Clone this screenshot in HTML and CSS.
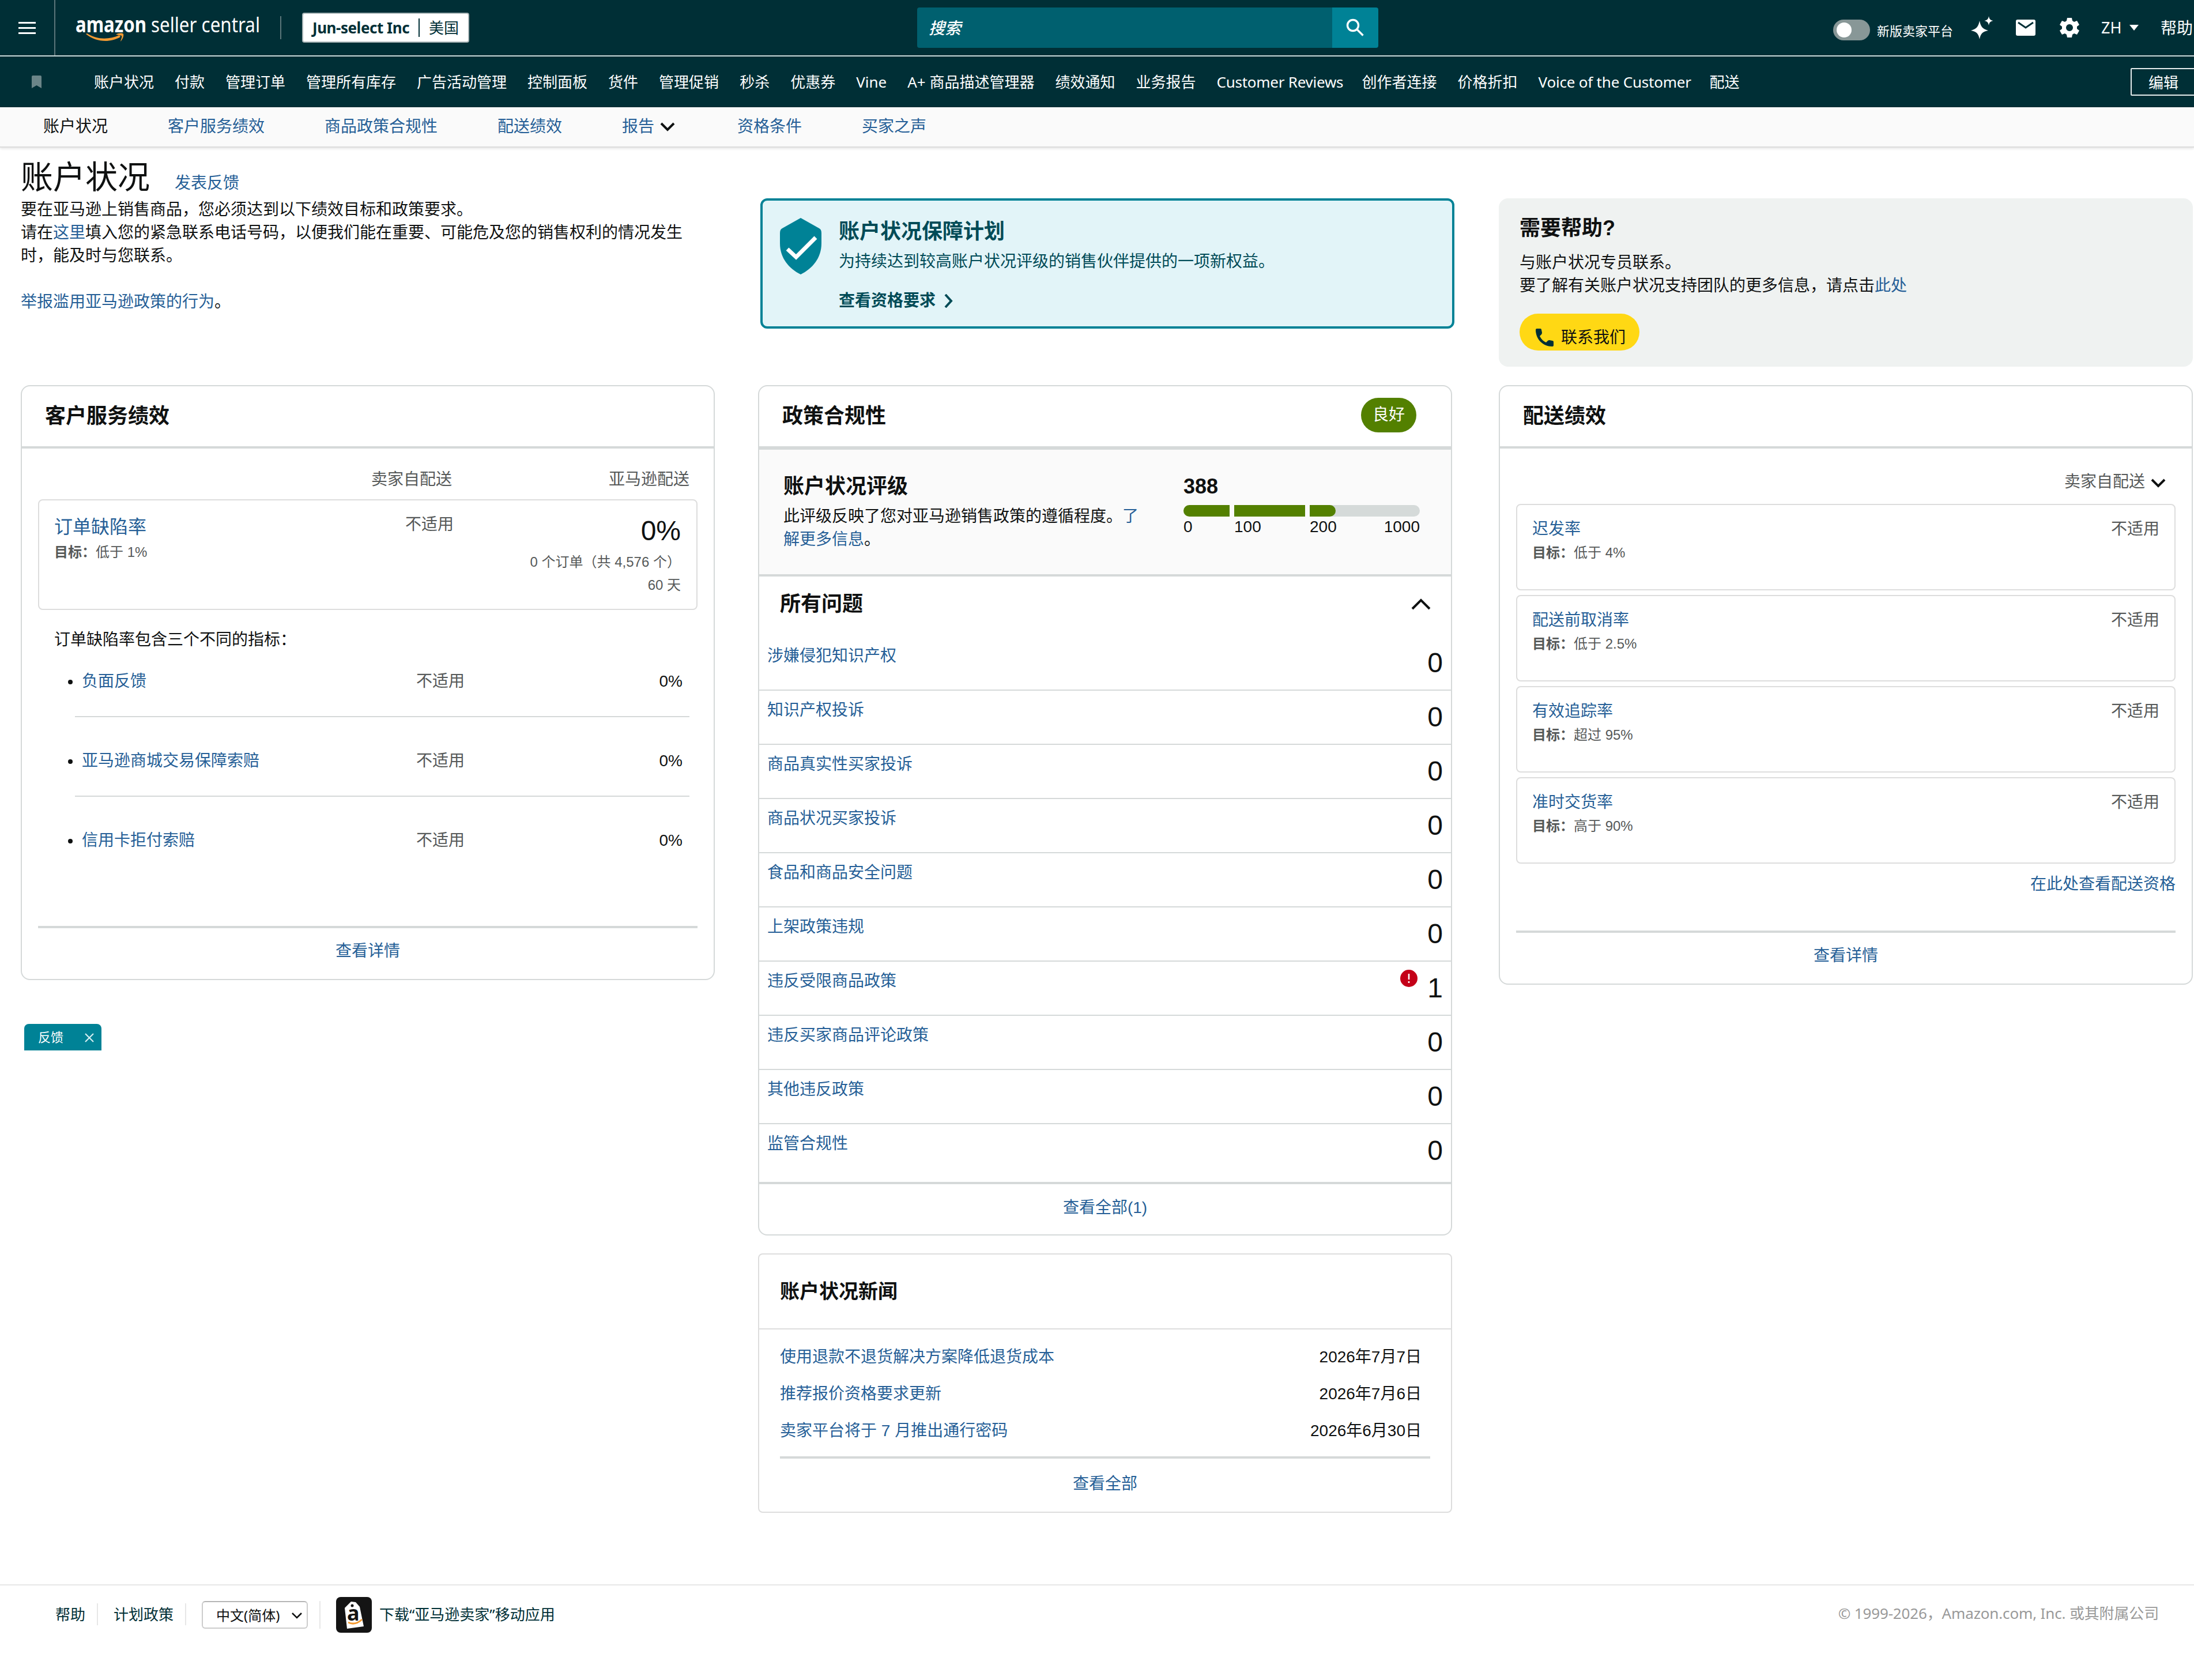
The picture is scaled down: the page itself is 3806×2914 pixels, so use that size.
FILE: index.html
```html
<!DOCTYPE html>
<html lang="zh-CN">
<head>
    <meta charset="UTF-8">
    <meta name="viewport" content="width=device-width, initial-scale=1.0">
    <title>账户状况</title>
    <link rel="stylesheet" href="styles.css">
</head>
<body>
    <header class="topbar">
        <div class="menu">
            <span></span><span></span><span></span>
        </div>
        <svg class="logo" width="324" height="76" viewBox="0 -16 324 76">
            <text x="0" y="36" class="logo-bold" textLength="123" lengthAdjust="spacingAndGlyphs">amazon</text>
            <text x="131" y="36" class="logo-light" textLength="189" lengthAdjust="spacingAndGlyphs">seller central</text>
            <path d="M18 39c17 14 41 16 60 5l-2-3c-18 8-39 8-56-3z" fill="#f49b33"/>
            <path d="M70 40c5-3 11-3 13-1 1 3-1 9-5 13 1-4 3-8 2-10-2-1-6-1-10-2z" fill="#f49b33"/>
        </svg>
        <div class="bar-divider"></div>
        <div class="account">
            <b>Jun-select Inc</b>
            <i></i>
            <span>美国</span>
        </div>
        <div class="search">
            <div class="search-input">搜索</div>
            <div class="search-button">
                <svg width="32" height="32" viewBox="0 0 32 32" fill="none" stroke="#fff" stroke-width="3.4">
                    <circle cx="12" cy="12" r="9.5"/>
                    <path d="M19 19l10.500 10.500"/>
                </svg>
            </div>
        </div>
        <div class="tools">
            <div class="toggle"><span></span></div>
            <span class="toggle-label">新版卖家平台</span>
            <svg class="spark" width="40" height="40" viewBox="0 0 40 40" fill="#fff">
                <path d="M16 8c2 10 5 14 15 17-10 2-13 5-15 15-2-10-5-13-15-15 10-3 13-7 15-17z"/>
                <path d="M32 0c1 5 2.500 7 7.500 8-5 1-6.500 3-7.500 8-1-5-2.500-7-7.500-8 5-1 6.500-3 7.500-8z"/>
            </svg>
            <svg class="mail" width="34" height="28" viewBox="0 0 34 28">
                <rect width="34" height="28" rx="3" fill="#fff"/>
                <path d="M4 5l13 9 13-9" fill="none" stroke="#002f36" stroke-width="3"/>
            </svg>
            <svg class="gear" width="34" height="34" viewBox="0 0 34 34">
                <path fill="#fff" fill-rule="evenodd" d="M13 0h8l1 5 3 2 5-2 4 7-4 3v4l4 3-4 7-5-2-3 2-1 5h-8l-1-5-3-2-5 2-4-7 4-3v-4l-4-3 4-7 5 2 3-2zM17 11a6 6 0 1 0 .01 0z"/>
            </svg>
            <span class="lang">ZH</span>
            <span class="caret"></span>
            <span class="help">帮助</span>
        </div>
    </header>

    <nav class="favorites">
        <svg width="17" height="22" viewBox="0 0 17 22"><path d="M0 2q0-2 2-2h13q2 0 2 2v20l-8.500-5L0 22z" fill="#6b8588"/></svg>
        <div class="fav-list">
            <span>账户状况</span>
            <span>付款</span>
            <span>管理订单</span>
            <span>管理所有库存</span>
            <span>广告活动管理</span>
            <span>控制面板</span>
            <span>货件</span>
            <span>管理促销</span>
            <span>秒杀</span>
            <span>优惠券</span>
            <span>Vine</span>
            <span>A+ 商品描述管理器</span>
            <span>绩效通知</span>
            <span>业务报告</span>
            <span class="fav-reviews">Customer Reviews</span>
            <span>创作者连接</span>
            <span>价格折扣</span>
            <span class="fav-voice">Voice of the Customer</span>
            <span>配送</span>
        </div>
        <div class="edit">编辑</div>
    </nav>

    <nav class="subnav">
        <span class="active">账户状况</span>
        <a>客户服务绩效</a>
        <a>商品政策合规性</a>
        <a>配送绩效</a>
        <a class="with-icon">报告
            <svg width="26" height="16" viewBox="0 0 26 16" fill="none" stroke="#0f1111" stroke-width="4"><path d="M2 2l11 11L24 2"/></svg>
        </a>
        <a>资格条件</a>
        <a>买家之声</a>
    </nav>

    <main>
        <section class="intro">
            <div class="intro-text">
                <div class="title-row">
                    <h1>账户状况</h1>
                    <a>发表反馈</a>
                </div>
                <p>要在亚马逊上销售商品，您必须达到以下绩效目标和政策要求。<br>请在<a>这里</a>填入您的紧急联系电话号码，以便我们能在重要、可能危及您的销售权利的情况发生时，能及时与您联系。</p>
                <p class="report"><a>举报滥用亚马逊政策的行为</a>。</p>
            </div>
            <div class="program">
                <svg class="shield" width="72" height="98" viewBox="0 0 72 98">
                    <path d="M36 0L68 18q4 2 4 8v18c0 26-16 44-36 54C16 88 0 70 0 44V26q0-6 4-8z" fill="#008296"/>
                    <path d="M13 54l15 14 34-34" fill="none" stroke="#fff" stroke-width="7"/>
                </svg>
                <div>
                    <h2>账户状况保障计划</h2>
                    <p>为持续达到较高账户状况评级的销售伙伴提供的一项新权益。</p>
                    <div class="program-link">查看资格要求
                        <svg width="16" height="24" viewBox="0 0 16 24" fill="none" stroke="#004b57" stroke-width="4"><path d="M3 1l10 11L3 23"/></svg>
                    </div>
                </div>
            </div>
            <div class="contact">
                <h2>需要帮助?</h2>
                <p>与账户状况专员联系。<br>要了解有关账户状况支持团队的更多信息，请点击<a>此处</a></p>
                <div class="contact-button">
                    <svg width="31" height="31" viewBox="0 0 31 31"><path d="M2 0h6q2 0 2 2l1 5q0 2-1 3l-3 3q4 8 11 11l3-3q1-1 3-1l5 1q2 0 2 2v6q0 2-2 2C12 31 0 18 0 2Q0 0 2 0z" fill="#002f36"/></svg>
                    <span>联系我们</span>
                </div>
            </div>
        </section>

        <section class="columns">
            <div class="column">
                <div class="card service-card">
                    <div class="card-head"><h2>客户服务绩效</h2></div>
                    <div class="service-cols">
                        <span>卖家自配送</span>
                        <span>亚马逊配送</span>
                    </div>
                    <div class="odr">
                        <div class="odr-name">
                            <a>订单缺陷率</a>
                            <p class="target"><b>目标：</b>低于 1%</p>
                        </div>
                        <div class="odr-self">不适用</div>
                        <div class="odr-fba">
                            <div class="big">0%</div>
                            <p>0 个订单（共 4,576 个）</p>
                            <p>60 天</p>
                        </div>
                    </div>
                    <p class="odr-note">订单缺陷率包含三个不同的指标：</p>
                    <ul class="odr-list">
                        <li><a>负面反馈</a><span class="gray">不适用</span><span>0%</span></li>
                        <li><a>亚马逊商城交易保障索赔</a><span class="gray">不适用</span><span>0%</span></li>
                        <li><a>信用卡拒付索赔</a><span class="gray">不适用</span><span>0%</span></li>
                    </ul>
                    <div class="card-foot"><a>查看详情</a></div>
                </div>
                <div class="feedback-tab">
                    <span>反馈</span>
                    <svg width="16" height="16" viewBox="0 0 16 16" stroke="#d5eef1" stroke-width="2.200"><path d="M1 1l14 14M15 1L1 15"/></svg>
                </div>
            </div>

            <div class="column">
                <div class="card policy-card">
                    <div class="card-head">
                        <h2>政策合规性</h2>
                        <span class="badge">良好</span>
                    </div>
                    <div class="rating">
                        <div class="rating-text">
                            <h2>账户状况评级</h2>
                            <p>此评级反映了您对亚马逊销售政策的遵循程度。<a>了解更多信息</a>。</p>
                        </div>
                        <div class="rating-score">
                            <h2>388</h2>
                            <div class="meter">
                                <span class="seg seg-1"></span>
                                <span class="seg seg-2"></span>
                                <span class="seg seg-3"></span>
                            </div>
                            <div class="scale">
                                <span>0</span><span>100</span><span>200</span><span>1000</span>
                            </div>
                        </div>
                    </div>
                    <div class="issues-head">
                        <h2>所有问题</h2>
                        <svg width="34" height="20" viewBox="0 0 34 20" fill="none" stroke="#0f1111" stroke-width="4"><path d="M2 18L17 3l15 15"/></svg>
                    </div>
                    <div class="issues">
                        <div class="issue"><a>涉嫌侵犯知识产权</a><span>0</span></div>
                        <div class="issue"><a>知识产权投诉</a><span>0</span></div>
                        <div class="issue"><a>商品真实性买家投诉</a><span>0</span></div>
                        <div class="issue"><a>商品状况买家投诉</a><span>0</span></div>
                        <div class="issue"><a>食品和商品安全问题</a><span>0</span></div>
                        <div class="issue"><a>上架政策违规</a><span>0</span></div>
                        <div class="issue">
                            <a>违反受限商品政策</a>
                            <svg width="30" height="30" viewBox="0 0 30 30">
                                <circle cx="15" cy="15" r="15" fill="#c40018"/>
                                <path d="M15 7v10M15 20v3" stroke="#fff" stroke-width="2.600"/>
                            </svg>
                            <span>1</span>
                        </div>
                        <div class="issue"><a>违反买家商品评论政策</a><span>0</span></div>
                        <div class="issue"><a>其他违反政策</a><span>0</span></div>
                        <div class="issue"><a>监管合规性</a><span>0</span></div>
                    </div>
                    <div class="card-foot"><a>查看全部(1)</a></div>
                </div>

                <div class="card news-card">
                    <div class="news-head"><h2>账户状况新闻</h2></div>
                    <div class="news-list">
                        <div><a>使用退款不退货解决方案降低退货成本</a><span>2026年7月7日</span></div>
                        <div><a>推荐报价资格要求更新</a><span>2026年7月6日</span></div>
                        <div><a>卖家平台将于 7 月推出通行密码</a><span>2026年6月30日</span></div>
                    </div>
                    <div class="card-foot"><a>查看全部</a></div>
                </div>
            </div>

            <div class="column">
                <div class="card shipping-card">
                    <div class="card-head"><h2>配送绩效</h2></div>
                    <div class="ship-select">卖家自配送
                        <svg width="26" height="16" viewBox="0 0 26 16" fill="none" stroke="#0f1111" stroke-width="4"><path d="M2 2l11 11L24 2"/></svg>
                    </div>
                    <div class="metric">
                        <div><a>迟发率</a><p class="target"><b>目标：</b>低于 4%</p></div>
                        <span>不适用</span>
                    </div>
                    <div class="metric">
                        <div><a>配送前取消率</a><p class="target"><b>目标：</b>低于 2.5%</p></div>
                        <span>不适用</span>
                    </div>
                    <div class="metric">
                        <div><a>有效追踪率</a><p class="target"><b>目标：</b>超过 95%</p></div>
                        <span>不适用</span>
                    </div>
                    <div class="metric">
                        <div><a>准时交货率</a><p class="target"><b>目标：</b>高于 90%</p></div>
                        <span>不适用</span>
                    </div>
                    <div class="ship-more"><a>在此处查看配送资格</a></div>
                    <div class="card-foot"><a>查看详情</a></div>
                </div>
            </div>
        </section>
    </main>

    <footer>
        <span class="foot-item foot-help">帮助</span>
        <span class="foot-item foot-policy">计划政策</span>
        <div class="lang-select">中文(简体)
            <svg width="18" height="12" viewBox="0 0 18 12" fill="none" stroke="#0f1111" stroke-width="2.600"><path d="M1 2l8 8 8-8"/></svg>
        </div>
        <div class="foot-line"></div>
        <svg class="app" width="62" height="62" viewBox="0 0 62 62">
            <rect width="62" height="62" rx="8" fill="#141414"/>
            <path d="M26 8l8 1 7 8 7 34-29 4-4-36z" fill="#fff"/>
            <circle cx="28" cy="15" r="2.500" fill="#141414"/>
            <text x="19" y="41" class="app-letter">a</text>
            <path d="M21 44q12 6 24-5" fill="none" stroke="#f49b33" stroke-width="3"/>
        </svg>
        <span>下载“亚马逊卖家”移动应用</span>
        <span class="copyright">© 1999-2026，Amazon.com, Inc. 或其附属公司</span>
    </footer>
</body>
</html>
```
FILE: styles.css
```css
* {
    box-sizing: border-box;
}
body {
    margin: 0;
    width: 3806px;
    height: 2914px;
    overflow: hidden;
    background: #fff;
    color: #0f1111;
    font-family: "Liberation Sans", "Noto Sans CJK SC", sans-serif;
    font-size: 28px;
    line-height: 40px;
}
h1, h2, p, ul {
    margin: 0;
    padding: 0;
}
h2 {
    font-size: 36px;
    line-height: 48px;
    font-weight: bold;
}
a {
    color: #265f97;
}
svg {
    display: block;
    flex-shrink: 0;
}

/* top bar */
.topbar, .favorites, footer {
    font-family: "Noto Sans", "Noto Sans CJK SC", sans-serif;
}
.topbar {
    display: flex;
    align-items: center;
    height: 98px;
    background: #002f36;
    border-bottom: 2px solid #ccd9da;
    color: #fff;
    font-size: 26px;
    white-space: nowrap;
}
.topbar > * {
    flex-shrink: 0;
}
.menu {
    width: 96px;
    height: 96px;
    padding: 38px 0 0 32px;
    border-right: 2px solid #5b767a;
}
.menu span {
    display: block;
    width: 30px;
    height: 3px;
    margin-bottom: 6px;
    background: #fff;
}
.logo {
    margin: -12px 0 0 35px;
}
.logo-bold {
    font-size: 37px;
    font-weight: bold;
    fill: #fff;
}
.logo-light {
    font-size: 37px;
    fill: #fff;
}
.bar-divider {
    width: 2px;
    height: 40px;
    margin-left: 31px;
    background: #5b767a;
}
.account {
    display: flex;
    align-items: center;
    width: 290px;
    height: 52px;
    margin-left: 36px;
    padding-left: 16px;
    background: #fff;
    border: 2px solid #a9b5b7;
    border-radius: 4px;
    color: #002f36;
    font-size: 26px;
}
.account b {
    flex-shrink: 0;
    width: 184px;
    letter-spacing: -0.45px;
}
.account i {
    width: 2px;
    height: 32px;
    background: #002f36;
    margin-right: 16px;
}
.search {
    display: flex;
    width: 800px;
    height: 70px;
    margin-left: 777px;
    border-radius: 4px;
    overflow: hidden;
}
.search-input {
    flex: 1;
    padding-left: 20px;
    background: #00606f;
    font-size: 28px;
    font-style: italic;
    font-weight: 500;
    line-height: 70px;
}
.search-button {
    display: flex;
    align-items: center;
    justify-content: center;
    width: 80px;
    background: #008296;
}
.tools {
    display: flex;
    align-items: center;
    margin-left: 789px;
}
.toggle {
    width: 64px;
    height: 36px;
    margin-top: 8px;
    padding: 5px 6px;
    border-radius: 18px;
    background: #889797;
}
.toggle span {
    display: block;
    width: 26px;
    height: 26px;
    border-radius: 50%;
    background: #fff;
}
.toggle-label {
    width: 132px;
    margin: 10px 0 0 12px;
    font-size: 22px;
}
.spark {
    margin-left: 30px;
}
.mail {
    margin-left: 39px;
}
.gear {
    margin-left: 42px;
}
.lang {
    width: 46px;
    margin-left: 38px;
    font-size: 27px;
}
.caret {
    margin-left: 3px;
    border: 8px solid transparent;
    border-top: 10px solid #fff;
    border-bottom: 0;
}
.help {
    margin-left: 38px;
    font-size: 28px;
}

/* favourites bar */
.favorites {
    display: flex;
    align-items: center;
    height: 88px;
    padding-left: 55px;
    background: #002f36;
    color: #fff;
    font-size: 26px;
    white-space: nowrap;
}
.fav-list {
    display: flex;
    gap: 36px;
    width: 3532px;
    margin-left: 91px;
    flex-shrink: 0;
}
.fav-reviews {
    width: 216px;
    letter-spacing: -0.25px;
}
.fav-voice {
    width: 261px;
    letter-spacing: -0.2px;
}
.edit {
    flex-shrink: 0;
    width: 140px;
    height: 48px;
    margin-left: 1px;
    padding-left: 29px;
    border: 2px solid #e5ecec;
    border-radius: 2px;
    line-height: 46px;
}

/* page tabs */
.subnav {
    display: flex;
    gap: 104px;
    height: 70px;
    padding: 14px 0 0 75px;
    background: #fafafa;
    border-bottom: 2px solid #ddd;
    box-shadow: 0 2px 4px rgba(0, 0, 0, 0.1);
}
.with-icon {
    display: flex;
    align-items: center;
    gap: 10px;
    width: 96px;
    height: 40px;
    white-space: nowrap;
}

main {
    height: 2492px;
}
.intro {
    display: flex;
    height: 412px;
}
.intro-text {
    width: 1160px;
    margin: 16px 123px 0 36px;
}
.title-row {
    display: flex;
    align-items: baseline;
    gap: 43px;
    height: 72px;
}
h1 {
    font-size: 56px;
    line-height: 72px;
    font-weight: normal;
}
.report {
    margin-top: 40px;
}
.program {
    display: flex;
    width: 1204px;
    height: 226px;
    margin-top: 88px;
    padding: 30px 0 0 30px;
    background: #e2f4f8;
    border: 4px solid #008296;
    border-radius: 12px;
    color: #004b57;
}
.shield {
    margin-right: 30px;
}
.program h2 {
    margin-bottom: 8px;
}
.program-link {
    display: flex;
    align-items: center;
    gap: 14px;
    margin-top: 28px;
    font-weight: bold;
}
.contact {
    width: 1204px;
    height: 292px;
    margin: 88px 0 0 77px;
    padding: 28px 36px;
    background: #eff2f1;
    border-radius: 16px;
}
.contact p {
    margin-top: 16px;
}
.contact-button {
    display: flex;
    align-items: center;
    width: 208px;
    height: 64px;
    margin-top: 28px;
    padding: 20px 0 0 28px;
    border-radius: 32px;
    background: #ffd814;
}
.contact-button svg {
    margin-top: -2px;
}
.contact-button span {
    margin-left: 13px;
}

/* cards */
.columns {
    display: flex;
    align-items: flex-start;
    padding-left: 36px;
}
.column {
    width: 1204px;
    flex-shrink: 0;
}
.column:nth-child(2) {
    margin: 0 81px 0 75px;
}
.card {
    display: flex;
    flex-direction: column;
    border: 2px solid #d5d9d9;
    border-radius: 16px;
}
.card-head {
    display: flex;
    align-items: center;
    justify-content: space-between;
    height: 108px;
    padding: 0 60px 0 40px;
    border-bottom: 4px solid #d5d9d9;
}
.card-foot {
    margin: auto 28px 0;
    padding: 20px 0 28px;
    border-top: 4px solid #d5d9d9;
    text-align: center;
}
.target {
    font-size: 24px;
    color: #565959;
}

/* customer service */
.service-card {
    height: 1032px;
}
.service-cols {
    display: grid;
    grid-template-columns: 746px 412px;
    padding: 34px 0 14px;
    text-align: right;
    color: #565959;
}
.odr {
    display: grid;
    grid-template-columns: 400px 1fr 394px;
    height: 192px;
    margin: 0 28px;
    padding: 24px 27px 0 26px;
    border: 2px solid #ddd;
    border-radius: 8px;
}
.odr-name a {
    display: block;
    font-size: 32px;
    line-height: 44px;
    margin-bottom: 2px;
}
.odr-self {
    margin-top: -2px;
    text-align: right;
    color: #565959;
}
.odr-fba {
    text-align: right;
    font-size: 24px;
    color: #565959;
}
.big {
    margin: 1px 0 6px;
    font-size: 48px;
    line-height: 56px;
    color: #0f1111;
}
.odr-note {
    padding: 32px 0 0 56px;
}
.odr-list {
    margin: 0 42px 0 92px;
    list-style: none;
}
.odr-list li {
    display: grid;
    grid-template-columns: 400px 264px 1fr;
    padding: 56px 12px 40px 12px;
    border-bottom: 2px solid #d5d9d9;
    text-align: right;
}
.odr-list li:first-child {
    padding-top: 32px;
}
.odr-list li:last-child {
    border-bottom: 0;
}
.odr-list a {
    display: flex;
    align-items: center;
}
.odr-list a::before {
    content: "";
    width: 8px;
    height: 8px;
    margin: 2px 16px 0 -24px;
    border-radius: 50%;
    background: #0f1111;
}
.gray {
    color: #565959;
}
.feedback-tab {
    display: flex;
    align-items: center;
    justify-content: space-between;
    width: 134px;
    height: 46px;
    margin: 76px 0 0 6px;
    padding: 2px 13px 0 24px;
    background: #008296;
    border-radius: 8px 8px 0 0;
    color: #fff;
    font-size: 22px;
}

/* policy compliance */
.policy-card {
    height: 1475px;
}
.badge {
    width: 96px;
    height: 60px;
    margin-top: -4px;
    border-radius: 30px;
    background: #538000;
    color: #fff;
    line-height: 60px;
    text-align: center;
}
.rating {
    display: flex;
    justify-content: space-between;
    height: 222px;
    padding: 40px 54px 0 42px;
    background: #fafafa;
    border-top: 2px solid #d5d9d9;
    border-bottom: 4px solid #d5d9d9;
}
.rating-text {
    width: 620px;
}
.rating-text h2, .rating-score h2 {
    margin-bottom: 8px;
}
.rating-score {
    width: 410px;
}
.meter {
    display: flex;
    gap: 8px;
    height: 20px;
    border-radius: 10px;
    background: linear-gradient(90deg, #fafafa 220px, #d5dad9 220px);
    overflow: hidden;
}
.seg {
    background: #538000;
}
.seg-1 {
    width: 80px;
}
.seg-2 {
    width: 123px;
}
.seg-3 {
    width: 45px;
    border-radius: 0 10px 10px 0;
}
.scale {
    display: grid;
    grid-template-columns: 88px 131px 1fr auto;
    line-height: 36px;
}
.issues-head {
    display: flex;
    align-items: center;
    justify-content: space-between;
    padding: 24px 35px 32px 36px;
}
.issue {
    display: flex;
    height: 94px;
    padding: 14px 14px 0 14px;
    border-bottom: 2px solid #d5d9d9;
}
.issue:last-child {
    border-bottom: 0;
}
.issue a {
    margin-right: auto;
}
.issue svg {
    margin-right: 17px;
}
.issue span {
    margin-top: 4px;
    font-size: 48px;
    line-height: 56px;
}
.policy-card .card-foot {
    margin: auto 0 0;
    padding: 21px 0 26px;
}

/* news */
.news-card {
    height: 450px;
    margin-top: 31px;
    border-color: #ddd;
    border-radius: 8px;
}
.news-head {
    height: 130px;
    padding: 40px 36px;
    border-bottom: 2px solid #ddd;
}
.news-head h2 {
    font-size: 34px;
}
.news-list {
    display: grid;
    gap: 24px;
    padding: 28px 51px 0 36px;
}
.news-list div {
    display: flex;
    justify-content: space-between;
}
.news-card .card-foot {
    margin: auto 36px 0;
    padding: 24px 0 28px;
}

/* shipping */
.shipping-card {
    height: 1040px;
}
.ship-select {
    display: flex;
    align-items: center;
    justify-content: flex-end;
    gap: 10px;
    padding: 38px 45px 18px 0;
    color: #565959;
}
.ship-select svg {
    margin-top: 4px;
}
.metric {
    display: flex;
    justify-content: space-between;
    height: 150px;
    margin: 0 28px 8px;
    padding: 22px 26px;
    border: 2px solid #ddd;
    border-radius: 8px;
}
.metric .target {
    margin-top: 1px;
}
.metric span {
    color: #565959;
}
.ship-more {
    margin: 8px 28px 0;
    text-align: right;
}

footer {
    display: flex;
    align-items: center;
    height: 166px;
    padding: 0 61px 64px 96px;
    border-top: 2px solid #e7e7e7;
    color: #002f36;
    font-size: 26px;
}
.foot-item {
    border-right: 2px solid #e7e7e7;
    line-height: 38px;
}
.foot-help {
    width: 74px;
}
.foot-policy {
    width: 153px;
    padding-left: 27px;
}
.lang-select {
    display: flex;
    align-items: center;
    justify-content: space-between;
    width: 184px;
    height: 48px;
    margin: 2px 0 0 27px;
    padding: 2px 8px 0 23px;
    border: 2px solid #ccc;
    border-top-color: #b5b5b5;
    border-radius: 6px;
    color: #0f1111;
    font-size: 24px;
    white-space: nowrap;
}
.foot-line {
    width: 2px;
    height: 48px;
    margin: 2px 0 0 20px;
    background: #e7e7e7;
}
.app {
    margin: 2px 13px 0 27px;
}
.app-letter {
    font-size: 36px;
    font-weight: bold;
    fill: #141414;
}
.copyright {
    margin: -4px 0 0 auto;
    color: #999;
    letter-spacing: -0.15px;
}
```
